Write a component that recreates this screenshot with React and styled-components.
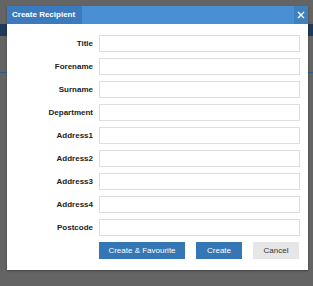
import React from "react";
import styled, { createGlobalStyle } from "styled-components";

const fields = [
  "Title",
  "Forename",
  "Surname",
  "Department",
  "Address1",
  "Address2",
  "Address3",
  "Address4",
  "Postcode",
];

const App = () => {
  return (
    <Page>
      <GlobalStyle />
      <TopGap />
      <NavBand />
      <MidGap />
      <Rule />
      <Dialog>
        <TitleBar>
          <TitleTab>Create Recipient</TitleTab>
          <Filler />
          <CloseButton aria-label="Close">
            <svg width="8" height="8" viewBox="0 0 8 8">
              <path d="M1 1 L7 7 M7 1 L1 7" stroke="#fff" strokeWidth="1.4" />
            </svg>
          </CloseButton>
        </TitleBar>
        <Form>
          {fields.map((f) => (
            <React.Fragment key={f}>
              <Label>{f}</Label>
              <Input type="text" />
            </React.Fragment>
          ))}
          <Actions>
            <Button $width={86}>Create &amp; Favourite</Button>
            <Button $width={46}>Create</Button>
            <Button $width={46} $secondary>
              Cancel
            </Button>
          </Actions>
        </Form>
      </Dialog>
    </Page>
  );
};

export default App;

const GlobalStyle = createGlobalStyle`
  html, body {
    margin: 0;
    padding: 0;
    background: #646464;
    font-family: "Liberation Sans", Arial, sans-serif;
  }
`;

const Page = styled.div`
  position: relative;
  width: 313px;
  height: 286px;
  background: #646464;
  overflow: hidden;
`;
const TopGap = styled.div`
  height: 24px;
`;
const NavBand = styled.div`
  height: 12px;
  background: #1e3a58;
`;
const MidGap = styled.div`
  height: 36px;
`;
const Rule = styled.div`
  height: 1px;
  background: #2c5a88;
`;
const Dialog = styled.div`
  position: absolute;
  left: 7px;
  top: 6px;
  width: 301px;
  height: 264px;
  background: #fff;
  box-shadow: 0 1px 2px rgba(0, 0, 0, 0.35);
  display: flex;
  flex-direction: column;
`;
const TitleBar = styled.div`
  height: 18px;
  display: flex;
  background: #4a8fd3;
`;
const TitleTab = styled.div`
  background: #3b7bbd;
  color: #fff;
  font-weight: bold;
  font-size: 8px;
  line-height: 18px;
  padding: 0 6px 0 5px;
  width: 64px;
`;
const Filler = styled.div`
  flex: 1;
`;
const CloseButton = styled.div`
  width: 14px;
  background: #3f80bf;
  display: flex;
  align-items: center;
  justify-content: center;
`;
const Form = styled.div`
  display: grid;
  grid-template-columns: 86px 201px;
  column-gap: 6px;
  row-gap: 6px;
  grid-auto-rows: 17px;
  padding-top: 11px;
`;
const Label = styled.label`
  text-align: right;
  font-weight: bold;
  font-size: 8px;
  line-height: 17px;
  color: #222;
`;
const Input = styled.input`
  box-sizing: border-box;
  width: 201px;
  height: 17px;
  margin: 0;
  padding: 0 3px;
  border: 1px solid #dedede;
  background: #fff;
  outline: none;
`;
const Actions = styled.div`
  grid-column: 2;
  display: flex;
  gap: 11px;
`;
const Button = styled.button`
  box-sizing: border-box;
  width: ${(p) => p.$width}px;
  height: 17px;
  margin: 0;
  padding: 0;
  border: none;
  background: ${(p) => (p.$secondary ? "#e6e6e6" : "#3477b4")};
  color: ${(p) => (p.$secondary ? "#333" : "#fff")};
  font-family: "Liberation Sans", Arial, sans-serif;
  font-size: 8px;
  line-height: 17px;
  text-align: center;
`;
